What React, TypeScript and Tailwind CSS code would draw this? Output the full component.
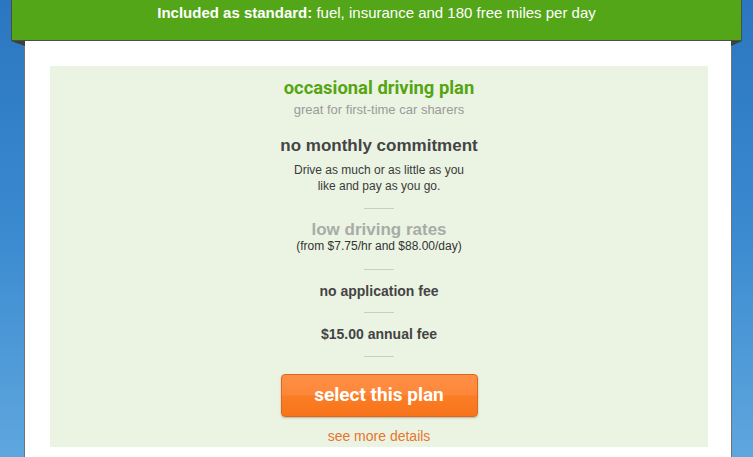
import React from 'react';

const Divider = () => <div className="w-[30px] h-px bg-[#c9cdc4]" />;

const App: React.FC = () => {
  return (
    <div className="w-[753px] h-[457px] overflow-hidden bg-gradient-to-b from-[#2b76c0] via-[#3a8ad0] to-[#5ea6de] font-['Liberation_Sans',Arial,sans-serif]">
      <div className="relative">
        <div className="relative z-10 mx-[11px] h-[41px] bg-[#53a617] border-x border-b border-[#4a4f45] text-white text-[15px] leading-[18px] text-center pt-[4px]">
          <span className="font-bold">Included as standard:</span> fuel, insurance and 180 free miles per day
        </div>
        <div className="absolute left-[11px] top-[41px] w-0 h-0 border-t-[5px] border-t-[#3c3f3a] border-l-[14px] border-l-transparent" />
        <div className="absolute right-[11px] top-[41px] w-0 h-0 border-t-[5px] border-t-[#3c3f3a] border-r-[11px] border-r-transparent" />
      </div>

      <div className="ml-[25px] mr-[22px] h-[416px] bg-white pl-[25px] pr-[23px] pt-[25px] shadow-[-1px_0_0_#6d747c,1px_0_0_#6d747c]">
        <div className="h-[381px] bg-[#ebf4e3] flex flex-col items-center text-center">
          <h2 className="mt-[11px] text-[18.4px] leading-[22px] font-bold text-[#55a512] font-['Roboto',sans-serif]">
            occasional driving plan
          </h2>
          <p className="mt-[3px] text-[13px] leading-[16px] text-[#9a9a9a]">great for first-time car sharers</p>

          <h3 className="mt-[18px] text-[17px] leading-[20px] font-bold text-[#444]">no monthly commitment</h3>
          <p className="mt-[6px] text-[12px] leading-[16px] text-[#3a3a3a]">
            Drive as much or as little as you
            <br />
            like and pay as you go.
          </p>

          <div className="mt-[14px]"><Divider /></div>

          <h3 className="mt-[13px] text-[17px] leading-[16px] font-bold text-[#a9aba7]">low driving rates</h3>
          <p className="text-[12px] leading-[16px] text-[#333]">(from $7.75/hr and $88.00/day)</p>

          <div className="mt-[15px]"><Divider /></div>

          <p className="mt-[12px] text-[14px] leading-[18px] font-bold text-[#444]">no application fee</p>

          <div className="mt-[12px]"><Divider /></div>

          <p className="mt-[12px] text-[14px] leading-[18px] font-bold text-[#444]">$15.00 annual fee</p>

          <div className="mt-[13px]"><Divider /></div>

          <button className="mt-[17px] w-[197px] h-[43px] rounded-[4px] border border-[#e0661a] bg-[linear-gradient(to_bottom,#ff9048_0%,#fd8638_48%,#fa7d25_52%,#f8741b_100%)] shadow-[0_1px_2px_rgba(0,0,0,0.25)] text-white text-[19px] font-bold font-['Roboto',sans-serif]">
            select this plan
          </button>

          <a className="mt-[11px] text-[14px] leading-[16px] text-[#e8742c]">see more details</a>
        </div>
      </div>
    </div>
  );
};

export default App;
